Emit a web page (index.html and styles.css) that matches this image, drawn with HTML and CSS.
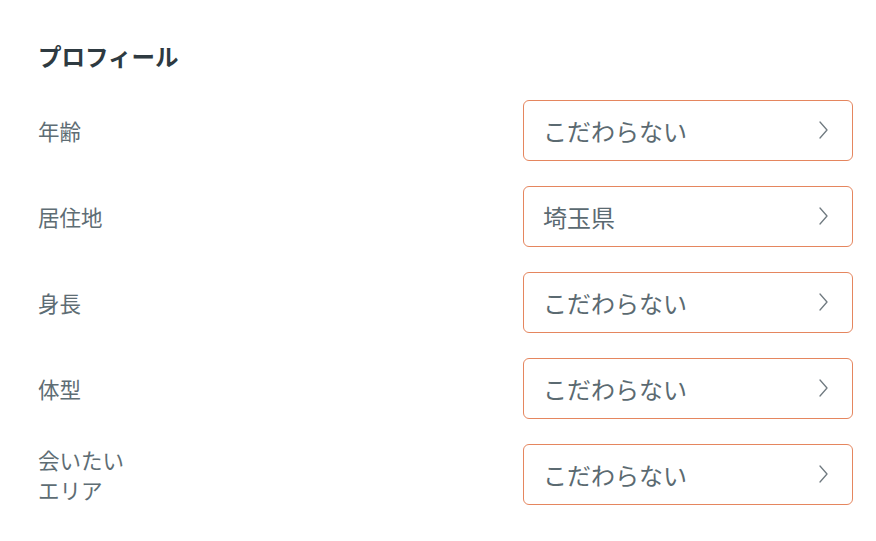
FILE: index.html
```html
<!DOCTYPE html>
<html lang="ja">
<head>
<meta charset="utf-8">
<link rel="stylesheet" href="styles.css">
</head>
<body>
<section class="profile">
  <h2 class="title">プロフィール</h2>
  <div class="rows">
    <div class="row">
      <div class="label">年齢</div>
      <button class="select"><span class="value">こだわらない</span><svg class="chev" viewBox="0 0 9 18" width="9" height="18"><path d="M1 1 L8 9 L1 17" fill="none" stroke="#707a80" stroke-width="1.3" stroke-linecap="round" stroke-linejoin="round"/></svg></button>
    </div>
    <div class="row">
      <div class="label">居住地</div>
      <button class="select"><span class="value">埼玉県</span><svg class="chev" viewBox="0 0 9 18" width="9" height="18"><path d="M1 1 L8 9 L1 17" fill="none" stroke="#707a80" stroke-width="1.3" stroke-linecap="round" stroke-linejoin="round"/></svg></button>
    </div>
    <div class="row">
      <div class="label">身長</div>
      <button class="select"><span class="value">こだわらない</span><svg class="chev" viewBox="0 0 9 18" width="9" height="18"><path d="M1 1 L8 9 L1 17" fill="none" stroke="#707a80" stroke-width="1.3" stroke-linecap="round" stroke-linejoin="round"/></svg></button>
    </div>
    <div class="row">
      <div class="label">体型</div>
      <button class="select"><span class="value">こだわらない</span><svg class="chev" viewBox="0 0 9 18" width="9" height="18"><path d="M1 1 L8 9 L1 17" fill="none" stroke="#707a80" stroke-width="1.3" stroke-linecap="round" stroke-linejoin="round"/></svg></button>
    </div>
    <div class="row">
      <div class="label">会いたい<br>エリア</div>
      <button class="select"><span class="value">こだわらない</span><svg class="chev" viewBox="0 0 9 18" width="9" height="18"><path d="M1 1 L8 9 L1 17" fill="none" stroke="#707a80" stroke-width="1.3" stroke-linecap="round" stroke-linejoin="round"/></svg></button>
    </div>
  </div>
</section>
</body>
</html>
```

FILE: styles.css
```css
* { box-sizing: border-box; }
html, body {
  margin: 0;
  background: #ffffff;
}
body {
  font-family: "Noto Sans CJK JP", "Noto Sans", sans-serif;
  color: #5e6d74;
}
.profile {
  padding: 38px 23px 0 38px;
}
.title {
  margin: 0 0 26px 0;
  font-size: 23.5px;
  line-height: 36px;
  font-weight: 700;
  color: #2e3a41;
}
.rows {
  display: flex;
  flex-direction: column;
  gap: 25px;
}
.row {
  display: flex;
  align-items: center;
  justify-content: space-between;
}
.label {
  font-size: 21.5px;
  line-height: 30px;
  color: #5e6d74;
}
.select {
  width: 330px;
  height: 61px;
  display: flex;
  align-items: center;
  justify-content: space-between;
  padding: 0 24px 0 19px;
  border: 1px solid #e5865f;
  border-radius: 6px;
  background: #ffffff;
  font-family: inherit;
  cursor: pointer;
}
.value {
  font-size: 24px;
  line-height: 32px;
  color: #5b6a71;
}
.chev {
  display: block;
  margin-top: -2px;
}
```
